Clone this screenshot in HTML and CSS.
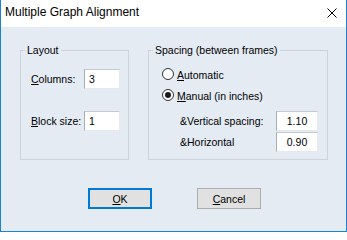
FILE: index.html
```
<!DOCTYPE html>
<html>
<head>
<meta charset="utf-8">
<link rel="stylesheet" href="styles.css">
</head>
<body>
<div class="window">
  <div class="titlebar">
    <span class="title">Multiple Graph Alignment</span>
    <svg class="close" width="10" height="10" viewBox="0 0 10 10"><path d="M0.5 0.5 L9.5 9.5 M9.5 0.5 L0.5 9.5" stroke="#000" stroke-width="1" fill="none"/></svg>
  </div>
  <div class="client">
    <div class="groups">
      <div class="group layout">
        <span class="legend">Layout</span>
        <div class="row">
          <span class="lbl"><u>C</u>olumns:</span>
          <span class="edit small">3</span>
        </div>
        <div class="row">
          <span class="lbl"><u>B</u>lock size:</span>
          <span class="edit small">1</span>
        </div>
      </div>
      <div class="group spacing">
        <span class="legend">Spacing (between frames)</span>
        <div class="radio-row">
          <span class="radio"></span>
          <span class="rtext"><u>A</u>utomatic</span>
        </div>
        <div class="radio-row second">
          <span class="radio on"></span>
          <span class="rtext"><u>M</u>anual (in inches)</span>
        </div>
        <div class="srow first">
          <span class="slbl">&amp;Vertical spacing:</span>
          <span class="edit num">1.10</span>
        </div>
        <div class="srow">
          <span class="slbl">&amp;Horizontal</span>
          <span class="edit num">0.90</span>
        </div>
      </div>
    </div>
    <div class="buttons">
      <span class="btn default"><u>O</u>K</span>
      <span class="btn"><u>C</u>ancel</span>
    </div>
  </div>
</div>
</body>
</html>
```
FILE: styles.css
```
* { box-sizing: border-box; }
html, body { margin: 0; padding: 0; }
body {
  font-family: "Liberation Sans", Arial, sans-serif;
  font-size: 10.5px;
  color: #000;
  background: #fff;
}
u { text-decoration: underline; text-underline-offset: 1px; }
.window {
  width: 347px;
  height: 232px;
  border: 1px solid #1883d7;
  border-top: none;
  display: flex;
  flex-direction: column;
  background: #e5ebf3;
}
.titlebar {
  height: 27px;
  background: #fff;
  display: flex;
  align-items: flex-start;
  padding-left: 4px;
  flex: none;
}
.title {
  font-size: 12px;
  line-height: 14px;
  margin-top: 5px;
}
.close {
  margin-left: auto;
  margin-right: 9px;
  margin-top: 8px;
}
.client {
  flex: 1;
  padding: 23px 0 0 19px;
}
.groups {
  display: flex;
  gap: 19px;
}
.group {
  position: relative;
  border: 1px solid #cdd3dc;
  height: 110px;
}
.legend {
  position: absolute;
  top: -7px;
  left: 4px;
  padding: 0 2px;
  line-height: 13px;
  background: #e5ebf3;
  white-space: nowrap;
}
.layout {
  width: 109px;
  padding: 18px 0 0 10px;
  display: flex;
  flex-direction: column;
  gap: 22px;
}
.row {
  display: flex;
  align-items: center;
  height: 20px;
}
.lbl { width: 53px; white-space: nowrap; }
.edit {
  display: block;
  height: 20px;
  line-height: 18px;
  background: #fff;
  border: 1px solid #e3e9ef;
  border-top-color: #c5c9d0;
  border-left-color: #a9adb4;
}
.edit.small { width: 36px; padding-left: 4px; }
.edit.num { width: 42px; text-align: center; }
.spacing {
  width: 180px;
  padding: 16px 0 0 13px;
}
.radio-row {
  display: flex;
  align-items: center;
  height: 14px;
}
.radio-row.second { margin-top: 7px; }
.radio {
  width: 12px;
  height: 12px;
  border-radius: 50%;
  border: 1px solid #333;
  background: #fff;
  display: flex;
  align-items: center;
  justify-content: center;
  margin-right: 3px;
  flex: none;
}
.radio.on::after {
  content: "";
  width: 6px;
  height: 6px;
  border-radius: 50%;
  background: #1a1a1a;
}
.rtext { padding-top: 2px; white-space: nowrap; }
.srow {
  display: flex;
  align-items: center;
  height: 20px;
  padding-left: 18px;
  margin-top: 1px;
}
.srow.first { margin-top: 9px; }
.slbl { width: 96px; white-space: nowrap; }
.buttons {
  display: flex;
  gap: 45px;
  margin-top: 28px;
  padding-left: 68px;
}
.btn {
  display: flex;
  align-items: center;
  justify-content: center;
  width: 64px;
  height: 21px;
  background: #e1e1e1;
  border: 1px solid #adadad;
}
.btn.default { border: 2px solid #0078d7; }
```
